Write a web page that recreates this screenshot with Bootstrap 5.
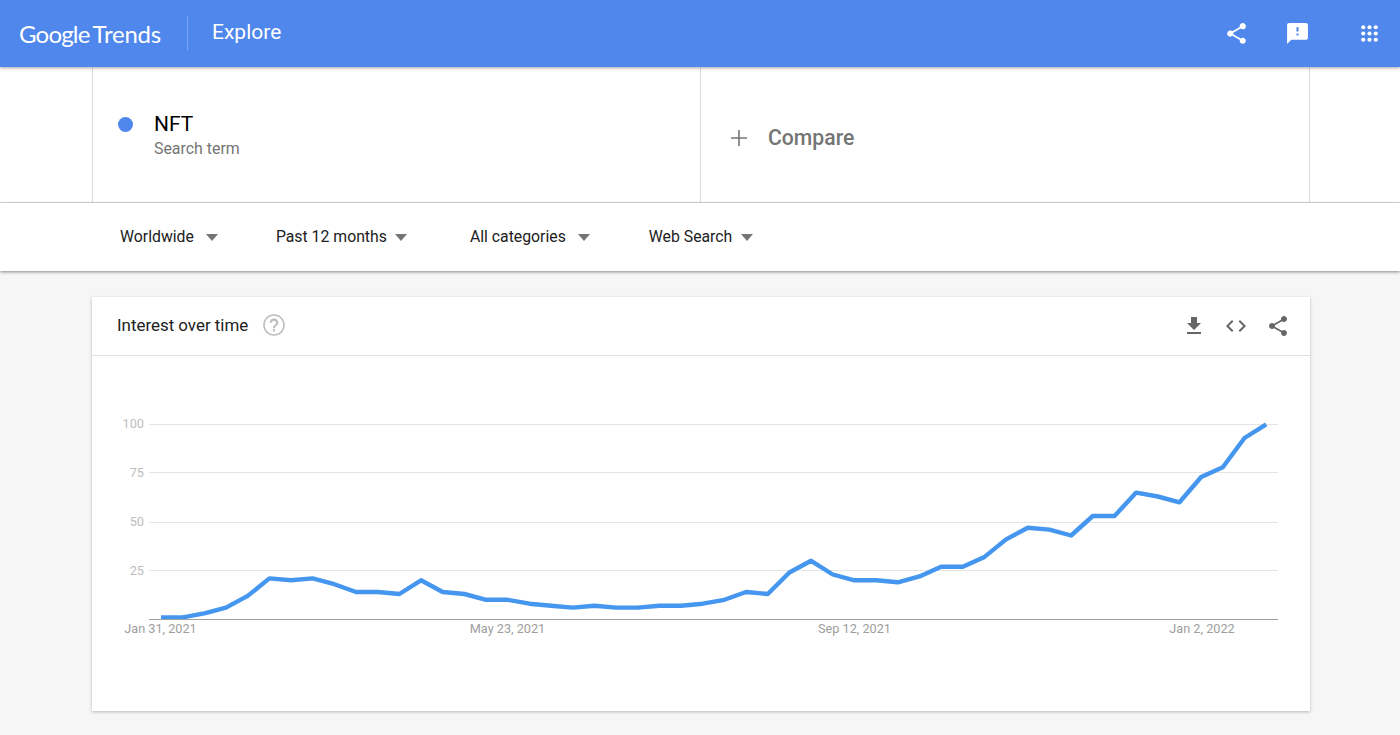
<!DOCTYPE html>
<html lang="en">

<head>
    <meta charset="UTF-8">
    <meta name="viewport" content="width=device-width, initial-scale=1.0">
    <title>Google Trends - Explore</title>
    <link href="https://cdn.jsdelivr.net/npm/bootstrap@5.3.0/dist/css/bootstrap.min.css" rel="stylesheet">
    <style>
        html, body {
            height: 735px;
            overflow: hidden;
        }

        body {
            background-color: #f6f6f6;
            font-family: Roboto, "Liberation Sans", sans-serif;
            color: #212121;
        }

        /* Top bar */
        .top-bar {
            height: 67px;
            background-color: #4f87ec;
            color: #fff;
            padding-left: 19px;
            box-shadow: 0 1px 3px rgba(0, 0, 0, .35);
            position: relative;
            z-index: 2;
        }

        .brand-name {
            font-family: Lato, sans-serif;
            font-size: 24px;
            letter-spacing: -.8px;
            width: 168px;
        }

        .brand-name span {
            margin-left: 3px;
            letter-spacing: -.2px;
        }

        .top-divider {
            width: 1px;
            height: 35px;
            background-color: #7aa5f1;
        }

        .top-title {
            font-size: 21px;
            margin-left: 24px;
            margin-top: -1px;
        }

        .top-icons svg {
            fill: #fff;
            display: block;
        }

        .top-icons {
            padding-right: 18px;
            gap: 36px;
        }

        .top-icons svg:last-child {
            margin-left: 11px;
        }

        /* Search terms */
        .term-band {
            height: 136px;
            background-color: #fff;
            border-bottom: 1px solid #dadada;
            padding: 0 90px 0 92px;
        }

        .term-cell {
            width: 608px;
            border-left: 1px solid #dadada;
        }

        .term-cell:last-child {
            width: 610px;
            padding-top: 6px;
            border-right: 1px solid #dadada;
        }

        .term-dot {
            width: 15px;
            height: 15px;
            border-radius: 50%;
            background-color: #4f87ec;
            margin-left: 25px;
            margin-right: 21px;
            margin-top: -20px;
        }

        .term-name {
            font-size: 21px;
            line-height: 24px;
            color: #000;
        }

        .term-kind {
            font-size: 15.9px;
            line-height: 20px;
            color: #757575;
            margin-top: 3px;
        }

        .term-text {
            margin-top: 2px;
        }

        .compare-label {
            font-size: 21.2px;
            font-weight: 500;
            color: #757575;
            margin-left: 20px;
        }

        .compare-plus {
            margin-left: 29px;
            fill: #757575;
        }

        /* Filters */
        .filter-band {
            height: 68px;
            background-color: #fff;
            box-shadow: 0 1px 3px rgba(0, 0, 0, .45);
            padding-left: 120px;
            position: relative;
            z-index: 1;
        }

        .filter-item {
            font-size: 15.8px;
            color: #212121;
        }

        .filter-arrow {
            width: 0;
            height: 0;
            border-left: 6px solid transparent;
            border-right: 6px solid transparent;
            border-top: 7px solid #757575;
            margin-left: 12px;
        }

        .filter-item:nth-child(1) {
            margin-right: 58px;
        }

        .filter-item:nth-child(2) {
            margin-right: 63px;
        }

        .filter-item:nth-child(2) .filter-arrow {
            margin-left: 8px;
        }

        .filter-item:nth-child(3) {
            margin-right: 59px;
        }

        .filter-item:nth-child(4) .filter-arrow {
            margin-left: 9px;
        }

        /* Chart card */
        .chart-card {
            width: 1218px;
            height: 414px;
            margin: 26px 0 0 92px;
            background-color: #fff;
            box-shadow: 0 1px 3px rgba(0, 0, 0, .25);
        }

        .chart-head {
            height: 59px;
            border-bottom: 1px solid #e0e0e0;
            padding: 0 20px 0 25px;
        }

        .chart-title {
            font-size: 16.9px;
            color: #212121;
        }

        .chart-help {
            fill: #bdbdbd;
            margin-left: 13px;
            margin-top: -2px;
        }

        .chart-actions svg {
            fill: #666;
            display: block;
        }

        .chart-actions {
            gap: 18px;
        }

        .trend-plot {
            display: block;
        }

        .trend-plot text {
            font-family: Roboto, "Liberation Sans", sans-serif;
            font-size: 12.7px;
        }

        .grid-line {
            stroke: #e4e4e4;
            stroke-width: 1;
        }

        .axis-line {
            stroke: #9e9e9e;
            stroke-width: 1;
        }

        .tick-y {
            fill: #bdbdbd;
            text-anchor: end;
        }

        .tick-x {
            fill: #9e9e9e;
            text-anchor: middle;
        }

        .trend-line {
            fill: none;
            stroke: #4496ee;
            stroke-width: 4.4;
            stroke-linejoin: round;
        }
    </style>
</head>

<body>

    <!-- Top bar -->
    <header class="top-bar d-flex align-items-center">
        <div class="brand-name">Google<span>Trends</span></div>
        <div class="top-divider"></div>
        <div class="top-title">Explore</div>
        <div class="top-icons d-flex align-items-center ms-auto">
            <svg width="25" height="25" viewBox="0 0 24 24"><path d="M18 16.08c-.76 0-1.44.3-1.96.77L8.91 12.7c.05-.23.09-.46.09-.7s-.04-.47-.09-.7l7.05-4.11c.54.5 1.25.81 2.04.81 1.66 0 3-1.34 3-3s-1.34-3-3-3-3 1.34-3 3c0 .24.04.47.09.7L8.04 9.81C7.5 9.31 6.79 9 6 9c-1.66 0-3 1.34-3 3s1.34 3 3 3c.79 0 1.5-.31 2.04-.81l7.12 4.16c-.05.21-.08.43-.08.65 0 1.61 1.31 2.92 2.92 2.92 1.61 0 2.92-1.31 2.92-2.92s-1.31-2.92-2.92-2.92z"/></svg>
            <svg width="25" height="25" viewBox="0 0 24 24"><path d="M20 2H4c-1.1 0-1.99.9-1.99 2L2 22l4-4h14c1.1 0 2-.9 2-2V4c0-1.1-.9-2-2-2zm-7 12h-2v-2h2v2zm0-4h-2V6h2v4z"/></svg>
            <svg width="25" height="25" viewBox="0 0 24 24"><circle cx="6" cy="6" r="2"/><circle cx="12" cy="6" r="2"/><circle cx="18" cy="6" r="2"/><circle cx="6" cy="12" r="2"/><circle cx="12" cy="12" r="2"/><circle cx="18" cy="12" r="2"/><circle cx="6" cy="18" r="2"/><circle cx="12" cy="18" r="2"/><circle cx="18" cy="18" r="2"/></svg>
        </div>
    </header>

    <!-- Search terms -->
    <section class="term-band d-flex">
        <div class="term-cell d-flex align-items-center">
            <div class="term-dot"></div>
            <div class="term-text">
                <div class="term-name">NFT</div>
                <div class="term-kind">Search term</div>
            </div>
        </div>
        <div class="term-cell d-flex align-items-center">
            <svg class="compare-plus" width="18" height="18" viewBox="0 0 18 18"><path d="M8.2 1h1.6v7.2H17v1.6H9.800V17H8.200V9.800H1V8.200h7.200z"/></svg>
            <div class="compare-label">Compare</div>
        </div>
    </section>

    <!-- Filters -->
    <section class="filter-band d-flex align-items-center">
        <div class="filter-item d-flex align-items-center">Worldwide<i class="filter-arrow"></i></div>
        <div class="filter-item d-flex align-items-center">Past 12 months<i class="filter-arrow"></i></div>
        <div class="filter-item d-flex align-items-center">All categories<i class="filter-arrow"></i></div>
        <div class="filter-item d-flex align-items-center">Web Search<i class="filter-arrow"></i></div>
    </section>

    <!-- Interest over time -->
    <section class="chart-card">
        <div class="chart-head d-flex align-items-center">
            <div class="chart-title">Interest over time</div>
            <svg class="chart-help" width="26" height="26" viewBox="0 0 24 24"><path d="M11 18h2v-2h-2v2zm1-16C6.480 2 2 6.480 2 12s4.480 10 10 10 10-4.480 10-10S17.520 2 12 2zm0 18.500c-4.700 0-8.500-3.800-8.500-8.500S7.300 3.500 12 3.500s8.500 3.800 8.500 8.500-3.800 8.500-8.500 8.500zM12 6c-2.210 0-4 1.790-4 4h2c0-1.100.9-2 2-2s2 .9 2 2c0 2-3 1.750-3 5h2c0-2.250 3-2.500 3-5 0-2.210-1.790-4-4-4z"/></svg>
            <div class="chart-actions d-flex align-items-center ms-auto">
                <svg width="24" height="24" viewBox="0 0 24 24"><path d="M19 9h-4V3H9v6H5l7 7 7-7zM5 18v2h14v-2H5z"/></svg>
                <svg width="24" height="24" viewBox="0 0 24 24"><path d="M9.400 16.600L4.800 12l4.600-4.600L8 6l-6 6 6 6 1.400-1.400zm5.200 0l4.600-4.600-4.600-4.600L16 6l6 6-6 6-1.400-1.400z"/></svg>
                <svg width="24" height="24" viewBox="0 0 24 24"><path d="M18 16.080c-.76 0-1.440.3-1.960.77L8.910 12.700c.05-.23.09-.46.09-.7s-.04-.47-.09-.7l7.050-4.110c.54.5 1.250.81 2.040.81 1.660 0 3-1.340 3-3s-1.340-3-3-3-3 1.340-3 3c0 .24.04.47.09.7L8.040 9.810C7.500 9.310 6.790 9 6 9c-1.660 0-3 1.340-3 3s1.340 3 3 3c.79 0 1.500-.31 2.040-.81l7.120 4.160c-.05.21-.08.43-.08.65 0 1.610 1.310 2.920 2.920 2.920 1.610 0 2.920-1.310 2.920-2.920s-1.310-2.920-2.920-2.920z"/></svg>
            </div>
        </div>
        <svg id="trend-plot" class="trend-plot" width="1218" height="355" viewBox="0 0 1218 355">
            <line class="grid-line" x1="57" x2="1186" y1="68.500" y2="68.500"/>
            <line class="grid-line" x1="57" x2="1186" y1="116.500" y2="116.500"/>
            <line class="grid-line" x1="57" x2="1186" y1="166.500" y2="166.500"/>
            <line class="grid-line" x1="57" x2="1186" y1="214.500" y2="214.500"/>
            <text class="tick-y" x="52" y="72">100</text>
            <text class="tick-y" x="52" y="121">75</text>
            <text class="tick-y" x="52" y="170">50</text>
            <text class="tick-y" x="52" y="219">25</text>
            <text class="tick-x" x="68.500" y="277">Jan 31, 2021</text>
            <text class="tick-x" x="415.500" y="277">May 23, 2021</text>
            <text class="tick-x" x="762.500" y="277">Sep 12, 2021</text>
            <text class="tick-x" x="1110" y="277">Jan 2, 2022</text>
            <polyline id="trend-line" class="trend-line" points=""/>
            <line class="axis-line" x1="57" x2="1186" y1="263.500" y2="263.500"/>
        </svg>
    </section>

    <script src="https://cdn.jsdelivr.net/npm/bootstrap@5.3.0/dist/js/bootstrap.bundle.min.js"></script>
    <script>
        // weekly interest values, read off the chart
        const weeks = [1, 1, 3, 6, 12, 21, 20, 21, 18, 14, 14, 13, 20, 14, 13, 10, 10, 8, 7, 6, 7, 6, 6, 7, 7, 8, 10, 14, 13, 24,
            30, 23, 20, 20, 19, 22, 27, 27, 32, 41, 47, 46, 43, 53, 53, 65, 63, 60, 73, 78, 93, 100];

        const points = weeks.map((value, i) => {
            const x = 69 + i * 21.67;
            const y = 263.3 - value * 1.95;
            return x.toFixed(1) + ',' + y.toFixed(1);
        });
        document.getElementById('trend-line').setAttribute('points', points.join(' '));
    </script>
</body>

</html>
